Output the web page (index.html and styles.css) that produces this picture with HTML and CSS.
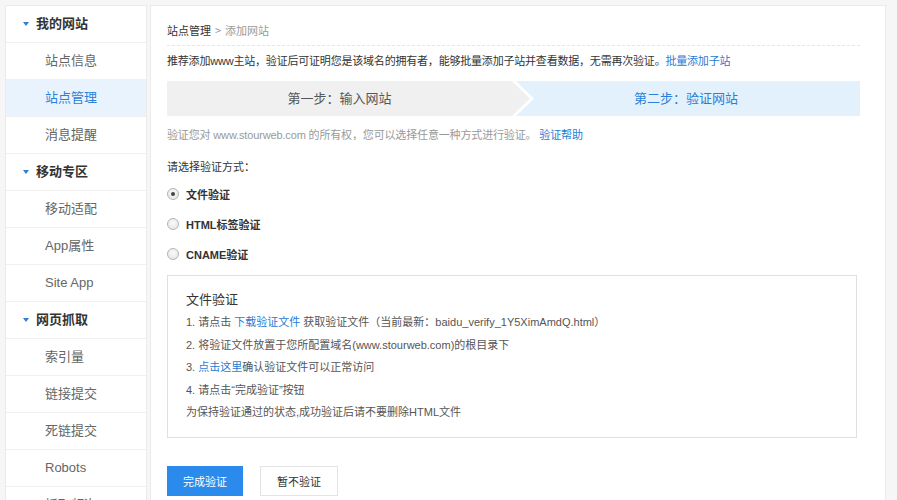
FILE: index.html
```html
<!DOCTYPE html>
<html lang="zh-CN">
<head>
<meta charset="utf-8">
<title>添加网站</title>
<link rel="stylesheet" href="styles.css">
</head>
<body>
<div class="page">
  <aside class="sidebar">
    <div class="group-title"><span class="tri"></span>我的网站</div>
    <div class="item">站点信息</div>
    <div class="item active">站点管理</div>
    <div class="item">消息提醒</div>
    <div class="group-title"><span class="tri"></span>移动专区</div>
    <div class="item">移动适配</div>
    <div class="item">App属性</div>
    <div class="item">Site App</div>
    <div class="group-title"><span class="tri"></span>网页抓取</div>
    <div class="item">索引量</div>
    <div class="item">链接提交</div>
    <div class="item">死链提交</div>
    <div class="item">Robots</div>
    <div class="item">抓取频次</div>
  </aside>
  <main class="main">
    <div class="crumb"><span class="crumb-cur">站点管理</span><span class="crumb-sep">&gt;</span><span class="crumb-now">添加网站</span></div>
    <p class="intro">推荐添加www主站，验证后可证明您是该域名的拥有者，能够批量添加子站并查看数据，无需再次验证。<a class="link">批量添加子站</a></p>
    <div class="steps">
      <div class="step1"><div class="step1-inner">第一步：输入网站</div></div>
      <div class="step2">第二步：验证网站</div>
    </div>
    <p class="note">验证您对 www.stourweb.com 的所有权，您可以选择任意一种方式进行验证。 <a class="link">验证帮助</a></p>
    <p class="choose">请选择验证方式：</p>
    <div class="radios">
      <div class="radio-row"><span class="radio checked"></span><span class="radio-label">文件验证</span></div>
      <div class="radio-row"><span class="radio"></span><span class="radio-label">HTML标签验证</span></div>
      <div class="radio-row"><span class="radio"></span><span class="radio-label">CNAME验证</span></div>
    </div>
    <div class="box">
      <div class="box-title">文件验证</div>
      <div class="box-line">1. 请点击 <a class="link">下载验证文件</a> 获取验证文件（当前最新：baidu_verify_1Y5XimAmdQ.html）</div>
      <div class="box-line">2. 将验证文件放置于您所配置域名(www.stourweb.com)的根目录下</div>
      <div class="box-line">3. <a class="link">点击这里</a>确认验证文件可以正常访问</div>
      <div class="box-line">4. 请点击“完成验证”按钮</div>
      <div class="box-line">为保持验证通过的状态,成功验证后请不要删除HTML文件</div>
    </div>
    <div class="buttons">
      <button class="btn btn-primary">完成验证</button>
      <button class="btn btn-default">暂不验证</button>
    </div>
  </main>
</div>
</body>
</html>
```

FILE: styles.css
```css
* { box-sizing: border-box; }
html, body { margin: 0; padding: 0; }
body {
  background: #f6f6f6;
  font-family: "Liberation Sans", "Noto Sans CJK SC", sans-serif;
  color: #333;
  height: 500px;
  overflow: hidden;
}
.page {
  display: flex;
  align-items: flex-start;
  gap: 3px;
  padding: 5px 0 0 5px;
}
.sidebar {
  width: 142px;
  background: #fff;
  border: 1px solid #ebebeb;
  border-bottom: none;
  flex: none;
}
.group-title, .item {
  height: 37px;
  line-height: 36px;
  border-bottom: 1px solid #f0f0f0;
  font-size: 13px;
}
.group-title {
  color: #333;
  font-weight: bold;
  padding-left: 17px;
  display: flex;
  align-items: center;
}
.tri {
  width: 0;
  height: 0;
  border-left: 3px solid transparent;
  border-right: 3px solid transparent;
  border-top: 4px solid #2b7fd6;
  margin-right: 7px;
  margin-top: -1px;
}
.item {
  color: #666;
  padding-left: 39px;
}
.item.active {
  background: #e9f3fd;
  color: #2b7fd6;
}
.main {
  width: 736px;
  height: 500px;
  background: #fff;
  border: 1px solid #ebebeb;
  border-bottom: none;
  padding: 0 25px 0 16px;
  flex: none;
}
.crumb {
  padding-top: 14px;
  padding-bottom: 4px;
  line-height: 20px;
  font-size: 11px;
  border-bottom: 1px dashed #e6e6e6;
}
.crumb-cur { color: #333; }
.crumb-sep { color: #999; margin: 0 4px; font-family: "Noto Sans CJK SC", sans-serif; }
.crumb-now { color: #999; }
p { margin: 0; }
.intro {
  margin-top: 5px;
  font-size: 11px;
  line-height: 20px;
  color: #333;
  letter-spacing: -0.2px;
}
.link { color: #1f7bd5; text-decoration: none; cursor: pointer; }
.steps {
  margin-top: 10px;
  height: 35px;
  display: flex;
  background: #e3f1fc;
}
.step1 {
  width: 367px;
  flex: none;
  background: #fff;
  position: relative;
  z-index: 1;
  clip-path: polygon(0 0, calc(100% - 18px) 0, 100% 50%, calc(100% - 18px) 100%, 0 100%);
}
.step1-inner {
  height: 100%;
  background: #f0f0f0;
  clip-path: polygon(0 0, calc(100% - 22px) 0, calc(100% - 4px) 50%, calc(100% - 22px) 100%, 0 100%);
  padding-right: 22px;
  text-align: center;
  line-height: 35px;
  font-size: 13px;
  color: #555;
}
.step2 {
  flex: 1;
  margin-left: -22px;
  text-align: center;
  line-height: 35px;
  font-size: 13px;
  color: #2b7fd6;
}
.note {
  margin-top: 9px;
  font-size: 11px;
  line-height: 20px;
  color: #999;
  letter-spacing: -0.15px;
}
.choose {
  margin-top: 12px;
  font-size: 11px;
  line-height: 20px;
  color: #333;
}
.radios { margin-top: 2px; }
.radio-row {
  height: 30px;
  display: flex;
  align-items: center;
}
.radio {
  width: 12px;
  height: 12px;
  border-radius: 50%;
  border: 1px solid #b5b5b5;
  background: radial-gradient(circle at 50% 40%, #fafafa 0%, #e2e2e2 100%);
  margin-left: 0;
  margin-right: 7px;
  display: flex;
  align-items: center;
  justify-content: center;
}
.radio.checked::after {
  content: "";
  width: 4px;
  height: 4px;
  border-radius: 50%;
  background: #444;
}
.radio-label {
  font-size: 11px;
  font-weight: bold;
  color: #333;
}
.box {
  margin-top: 6px;
  margin-right: 3px;
  border: 1px solid #e0e0e0;
  padding: 13px 18px 14px 18px;
  height: 163px;
}
.box-title {
  font-size: 13px;
  line-height: 22px;
  color: #333;
}
.box-line {
  font-size: 11px;
  line-height: 22.5px;
  color: #555;
}
.buttons {
  margin-top: 28px;
  display: flex;
  gap: 17px;
}
.btn {
  height: 30px;
  font-family: "Liberation Sans", "Noto Sans CJK SC", sans-serif;
  font-size: 11px;
  padding: 0;
  cursor: pointer;
}
.btn-primary {
  width: 76px;
  background: #2b8bec;
  border: 1px solid #2b8bec;
  color: #fff;
}
.btn-default {
  width: 78px;
  background: #fff;
  border: 1px solid #e3e3e3;
  color: #333;
}
```
